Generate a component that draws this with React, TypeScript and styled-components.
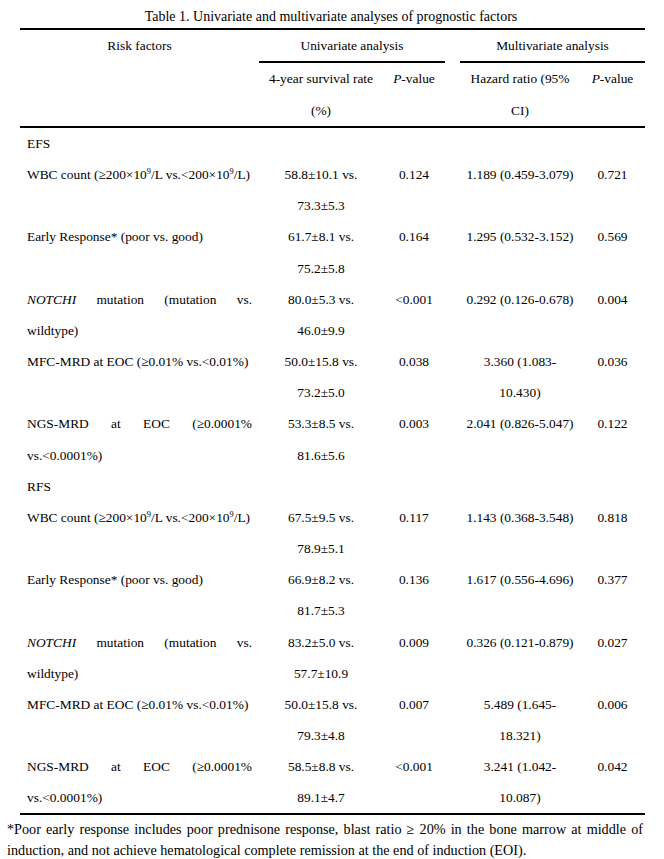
import React from "react";
import styled, { createGlobalStyle } from "styled-components";

const GlobalStyle = createGlobalStyle`
  html, body {
    margin: 0;
    padding: 0;
    background: #fff;
  }
  body {
    font-family: "Liberation Serif", "Times New Roman", serif;
    color: #000;
  }
`;

const COLS = "239px 124px 62px 135px 65px";
const ROW_H = "31.15px";

type Row = {
  factor: React.ReactNode[];
  rate: string[];
  p1: string;
  hr: string[];
  p2: string;
};

type Section = {
  label: string;
  rows: Row[];
};

const Sup = styled.sup`
  font-size: 0.62em;
  line-height: 0;
  vertical-align: 0.55em;
`;

const Gene = styled.i`
  font-style: italic;
`;

const wbc = (
  <>
    WBC count (≥200×10<Sup>9</Sup>/L vs.&lt;200×10<Sup>9</Sup>/L)
  </>
);
const early = <>Early Response* (poor vs. good)</>;
const notch = [
  <>
    <Gene>NOTCHI</Gene> mutation (mutation vs.
  </>,
  <>wildtype)</>,
];
const mfc = <>MFC-MRD at EOC (≥0.01% vs.&lt;0.01%)</>;
const ngs = [<>NGS-MRD at EOC (≥0.0001%</>, <>vs.&lt;0.0001%)</>];

const sections: Section[] = [
  {
    label: "EFS",
    rows: [
      { factor: [wbc], rate: ["58.8±10.1 vs.", "73.3±5.3"], p1: "0.124", hr: ["1.189 (0.459-3.079)"], p2: "0.721" },
      { factor: [early], rate: ["61.7±8.1 vs.", "75.2±5.8"], p1: "0.164", hr: ["1.295 (0.532-3.152)"], p2: "0.569" },
      { factor: notch, rate: ["80.0±5.3 vs.", "46.0±9.9"], p1: "<0.001", hr: ["0.292 (0.126-0.678)"], p2: "0.004" },
      { factor: [mfc], rate: ["50.0±15.8 vs.", "73.2±5.0"], p1: "0.038", hr: ["3.360 (1.083-", "10.430)"], p2: "0.036" },
      { factor: ngs, rate: ["53.3±8.5 vs.", "81.6±5.6"], p1: "0.003", hr: ["2.041 (0.826-5.047)"], p2: "0.122" },
    ],
  },
  {
    label: "RFS",
    rows: [
      { factor: [wbc], rate: ["67.5±9.5 vs.", "78.9±5.1"], p1: "0.117", hr: ["1.143 (0.368-3.548)"], p2: "0.818" },
      { factor: [early], rate: ["66.9±8.2 vs.", "81.7±5.3"], p1: "0.136", hr: ["1.617 (0.556-4.696)"], p2: "0.377" },
      { factor: notch, rate: ["83.2±5.0 vs.", "57.7±10.9"], p1: "0.009", hr: ["0.326 (0.121-0.879)"], p2: "0.027" },
      { factor: [mfc], rate: ["50.0±15.8 vs.", "79.3±4.8"], p1: "0.007", hr: ["5.489 (1.645-", "18.321)"], p2: "0.006" },
      { factor: ngs, rate: ["58.5±8.8 vs.", "89.1±4.7"], p1: "<0.001", hr: ["3.241 (1.042-", "10.087)"], p2: "0.042" },
    ],
  },
];

const App = () => (
  <>
    <GlobalStyle />
    <Page>
      <Caption>Table 1. Univariate and multivariate analyses of prognostic factors</Caption>
      <Table>
        <Head>
          <RiskHead>Risk factors</RiskHead>
          <Group>Univariate analysis</Group>
          <Group $indent={15}>Multivariate analysis</Group>
          <SubHead>
            4-year survival rate
            <br />
            (%)
          </SubHead>
          <SubHead>
            <i>P</i>-value
          </SubHead>
          <SubHead $indent={15}>
            Hazard ratio (95%
            <br />
            CI)
          </SubHead>
          <SubHead>
            <i>P</i>-value
          </SubHead>
        </Head>
        <Body>
          {sections.map((s) => (
            <React.Fragment key={s.label}>
              <SectionLabel>{s.label}</SectionLabel>
              {s.rows.map((r, i) => (
                <React.Fragment key={s.label + i}>
                  <Factor>
                    {r.factor.map((line, j) =>
                      r.factor.length > 1 && j === 0 ? (
                        <Justified key={j}>{line}</Justified>
                      ) : (
                        <Line key={j}>{line}</Line>
                      )
                    )}
                  </Factor>
                  <Value>
                    {r.rate.map((t) => (
                      <Line key={t}>{t}</Line>
                    ))}
                  </Value>
                  <Value>{r.p1}</Value>
                  <Value $indent={15}>
                    {r.hr.map((t) => (
                      <Line key={t}>{t}</Line>
                    ))}
                  </Value>
                  <Value>{r.p2}</Value>
                </React.Fragment>
              ))}
            </React.Fragment>
          ))}
        </Body>
      </Table>
      <Footnote>
        *Poor early response includes poor prednisone response, blast ratio ≥ 20% in the bone marrow at middle of
        induction, and not achieve hematological complete remission at the end of induction (EOI).
      </Footnote>
    </Page>
  </>
);

export default App;

const Page = styled.div`
  width: 664px;
  padding-top: 7px;
  font-size: 13.4px;
`;

const Caption = styled.div`
  text-align: center;
  font-size: 14px;
  line-height: 20px;
  padding-right: 2px;
`;

const Table = styled.div`
  margin: 1px 19px 0 20px;
  border-top: 2px solid #000;
  border-bottom: 2px solid #000;
`;

const Head = styled.div`
  display: grid;
  grid-template-columns: ${COLS};
  border-bottom: 2px solid #000;
`;

const RiskHead = styled.div`
  grid-row: span 2;
  text-align: center;
  line-height: 31px;
`;

const Group = styled.div<{ $indent?: number }>`
  grid-column: span 2;
  margin-left: ${(p) => p.$indent ?? 0}px;
  border-bottom: 2px solid #000;
  text-align: center;
  line-height: 31px;
`;

const SubHead = styled.div<{ $indent?: number }>`
  padding-left: ${(p) => p.$indent ?? 0}px;
  text-align: center;
  line-height: 31.5px;
`;

const Body = styled.div`
  display: grid;
  grid-template-columns: ${COLS};
  line-height: ${ROW_H};
`;

const SectionLabel = styled.div`
  grid-column: 1 / -1;
  padding-left: 7px;
`;

const Factor = styled.div`
  padding: 0 7px;
`;

const Line = styled.div`
  white-space: nowrap;
`;

const Justified = styled.div`
  text-align: justify;
  text-align-last: justify;
`;

const Value = styled.div<{ $indent?: number }>`
  padding-left: ${(p) => p.$indent ?? 0}px;
  text-align: center;
  white-space: nowrap;
`;

const Footnote = styled.p`
  margin: 0 21px 0 7px;
  padding-top: 4px;
  font-size: 14.2px;
  line-height: 21px;
  text-align: justify;
`;
